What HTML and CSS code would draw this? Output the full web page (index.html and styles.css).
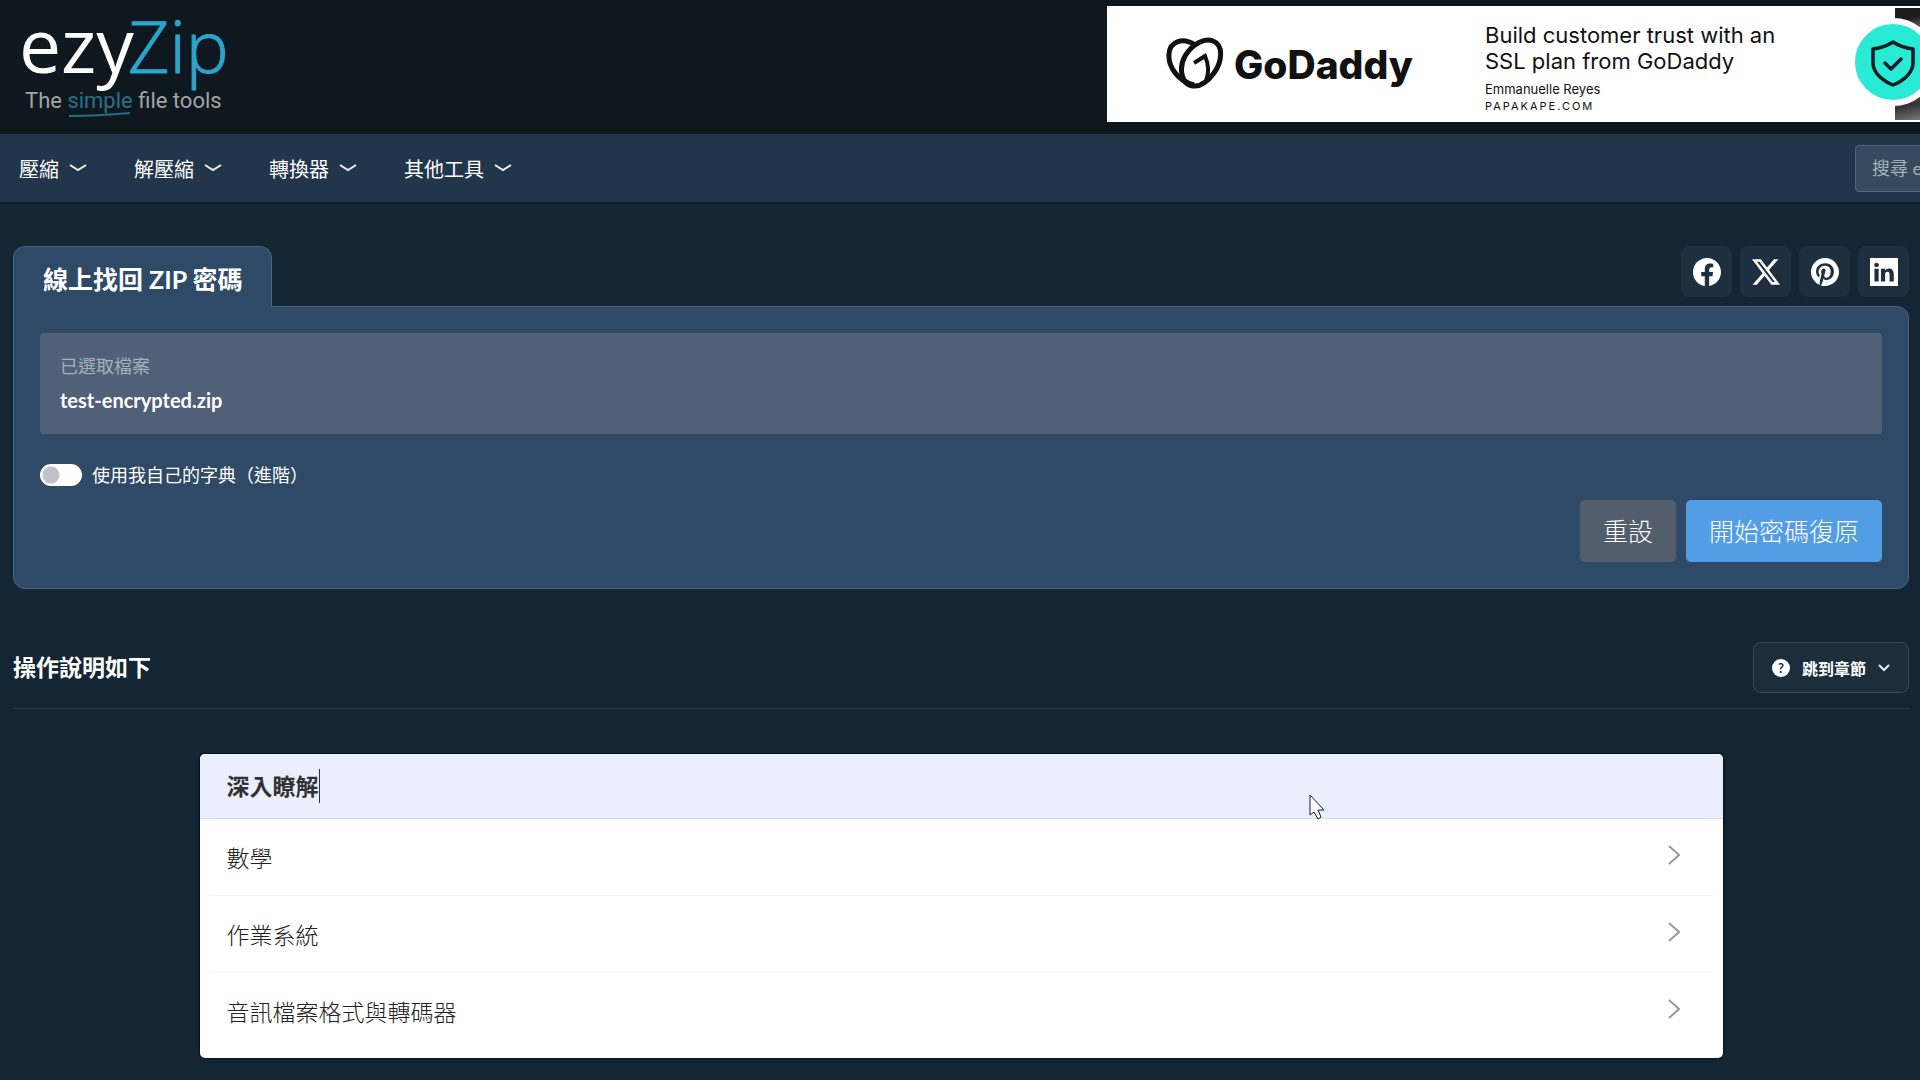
FILE: index.html
```html
<!DOCTYPE html>
<html lang="zh-Hant">
<head>
    <meta charset="UTF-8">
    <meta name="viewport" content="width=device-width, initial-scale=1.0">
    <title>線上找回 ZIP 密碼 - ezyZip</title>
    <link rel="stylesheet" href="styles.css">
</head>
<body>
    <header class="header">
        <a class="logo" href="#" aria-label="ezyZip">
            <svg width="240" height="124" viewBox="0 0 240 124">
                <text class="logo-ezy" x="19" y="73">ezy</text>
                <text class="logo-zip" x="128" y="73">Zip</text>
                <text class="logo-tagline" x="25" y="108">The <tspan class="logo-simple">simple</tspan> file tools</text>
                <path d="M69 116Q97 116 130 113" fill="none" stroke="#226f8a" stroke-width="2"/>
            </svg>
        </a>
        <a class="ad" href="#">
            <svg class="ad-logo" width="60" height="54" viewBox="0 0 60 54" fill="none" stroke="#111" stroke-width="5">
                <path d="M28 48C12 44 2 30 3 17C4 4 17 0 29 8"/>
                <path d="M29 49C14 49 13 30 19 19C27 6 39 1 47 4C58 8 56 25 48 36C42 44 36 49 29 49Z"/>
                <path d="M28 26L39 19C43 28 43 36 40 44" stroke-width="4"/>
            </svg>
            <span class="ad-brand">GoDaddy</span>
            <span class="ad-text">
                <span class="ad-title">Build customer trust with an<br>SSL plan from GoDaddy</span>
                <span class="ad-name">Emmanuelle Reyes</span>
                <span class="ad-site">PAPAKAPE.COM</span>
            </span>
            <span class="ad-photo"></span>
            <span class="ad-badge">
                <svg width="46" height="48" viewBox="0 0 46 48" fill="none" stroke="#101c26" stroke-width="3.5" stroke-linecap="round" stroke-linejoin="round">
                    <path d="M23 3C29 7 36 9 43 10V24C43 34 33 42 23 46C13 42 3 34 3 24V10C10 9 17 7 23 3Z"/>
                    <path d="M15 24L21 30L31 20"/>
                </svg>
            </span>
        </a>
    </header>

    <nav class="nav">
        <div class="menu">
            <a href="#">壓縮 <svg width="18" height="8" viewBox="0 0 18 8"><path d="M1 1L9 6L17 1"/></svg></a>
            <a href="#">解壓縮 <svg width="18" height="8" viewBox="0 0 18 8"><path d="M1 1L9 6L17 1"/></svg></a>
            <a href="#">轉換器 <svg width="18" height="8" viewBox="0 0 18 8"><path d="M1 1L9 6L17 1"/></svg></a>
            <a href="#">其他工具 <svg width="18" height="8" viewBox="0 0 18 8"><path d="M1 1L9 6L17 1"/></svg></a>
        </div>
        <input class="search" type="search" placeholder="搜尋 ezyZip" aria-label="搜尋 ezyZip">
    </nav>

    <main class="main">
        <div class="top">
            <h1 class="tab">線上找回 ZIP 密碼</h1>
            <div class="social">
                <a href="#" aria-label="Facebook">
                    <svg width="28" height="28" viewBox="0 0 16 16"><path d="M16 8.049c0-4.446-3.582-8.05-8-8.05C3.58 0-.002 3.603-.002 8.05c0 4.017 2.926 7.347 6.75 7.951v-5.625h-2.03V8.05H6.75V6.275c0-2.017 1.195-3.131 3.022-3.131.876 0 1.791.157 1.791.157v1.98h-1.009c-.993 0-1.303.621-1.303 1.258v1.51h2.218l-.354 2.326H9.25V16c3.824-.604 6.75-3.934 6.75-7.951"/></svg>
                </a>
                <a href="#" aria-label="X">
                    <svg width="28" height="28" viewBox="0 0 16 16"><path d="M12.6.75h2.454l-5.36 6.142L16 15.25h-4.937l-3.867-5.07-4.425 5.07H.316l5.733-6.57L0 .75h5.063l3.495 4.633L12.601.75Zm-.86 13.028h1.36L4.323 2.145H2.865z"/></svg>
                </a>
                <a href="#" aria-label="Pinterest">
                    <svg width="28" height="28" viewBox="0 0 16 16"><path d="M8 0a8 8 0 0 0-2.915 15.452c-.07-.633-.134-1.606.027-2.297.146-.625.938-3.977.938-3.977s-.239-.479-.239-1.187c0-1.113.645-1.943 1.448-1.943.682 0 1.012.512 1.012 1.127 0 .686-.437 1.712-.663 2.663-.188.796.4 1.446 1.185 1.446 1.422 0 2.515-1.5 2.515-3.664 0-1.915-1.377-3.254-3.342-3.254-2.276 0-3.612 1.707-3.612 3.471 0 .688.265 1.425.595 1.826a.24.24 0 0 1 .056.23c-.061.252-.196.796-.222.907-.035.146-.116.177-.268.107-1-.465-1.624-1.926-1.624-3.1 0-2.523 1.834-4.84 5.286-4.84 2.775 0 4.932 1.977 4.932 4.62 0 2.757-1.739 4.976-4.151 4.976-.811 0-1.573-.421-1.834-.919l-.498 1.902c-.181.695-.669 1.566-.995 2.097A8 8 0 1 0 8 0"/></svg>
                </a>
                <a href="#" aria-label="LinkedIn">
                    <svg width="28" height="28" viewBox="0 0 16 16"><path fill-rule="evenodd" d="M0 0H16V16H0ZM4.943 13.394V6.169H2.542V13.394ZM3.743 5.182C4.58 5.182 5.1 4.628 5.1 3.934C5.085 3.226 4.58 2.686 3.758 2.686S2.4 3.226 2.4 3.934C2.4 4.628 2.921 5.182 3.727 5.182ZM8.651 13.394V9.359C8.651 9.143 8.667 8.928 8.73 8.773C8.904 8.341 9.299 7.894 9.962 7.894C10.831 7.894 11.178 8.556 11.178 9.527V13.394H13.579V9.25C13.579 7.03 12.395 5.998 10.815 5.998C9.541 5.998 8.97 6.698 8.651 7.189V6.169H6.25V13.394Z"/></svg>
                </a>
            </div>
        </div>

        <section class="panel">
            <div class="file">
                <div class="file-label">已選取檔案</div>
                <div class="file-name">test-encrypted.zip</div>
            </div>
            <label class="switch">
                <input type="checkbox">
                使用我自己的字典（進階）
            </label>
            <div class="buttons">
                <button class="btn" type="button">重設</button>
                <button class="btn btn-primary" type="button">開始密碼復原</button>
            </div>
        </section>

        <div class="instructions">
            <h2>操作說明如下</h2>
            <button class="jump" type="button">
                <span class="help">?</span>
                跳到章節
                <svg width="12" height="8" viewBox="0 0 12 8"><path d="M1 1L6 6L11 1"/></svg>
            </button>
        </div>

        <section class="learn">
            <h3><span class="caret">深入瞭解</span></h3>
            <ul>
                <li><a href="#">數學 <svg width="12" height="24" viewBox="0 0 12 24"><path d="M1 1L11 10L1 19"/></svg></a></li>
                <li><a href="#">作業系統 <svg width="12" height="24" viewBox="0 0 12 24"><path d="M1 1L11 10L1 19"/></svg></a></li>
                <li><a href="#">音訊檔案格式與轉碼器 <svg width="12" height="24" viewBox="0 0 12 24"><path d="M1 1L11 10L1 19"/></svg></a></li>
            </ul>
            <svg class="pointer" width="17" height="26" viewBox="0 0 17 26"><path d="M1 1V21L5 18L9 25L12 23L9 16H15Z" fill="#fff" stroke="#1b1b2b"/></svg>
        </section>
    </main>
</body>
</html>
```
FILE: styles.css
```css
* {
    box-sizing: border-box;
}
body {
    margin: 0;
    font-family: Lato, "Noto Sans CJK TC", sans-serif;
    font-size: 18px;
    color: #fff;
    background-color: #142634;
}
a {
    color: inherit;
    text-decoration: none;
}
h1, h2, h3, ul {
    margin: 0;
    padding: 0;
}

/* header */
.header {
    display: flex;
    justify-content: space-between;
    align-items: flex-start;
    height: 134px;
    padding-top: 6px;
    background-color: #0e181e;
}
.logo svg {
    display: block;
    margin-top: -6px;
    overflow: visible;
}
.logo-ezy {
    font: 500 75px "Open Sans", sans-serif;
    fill: #fff;
}
.logo-zip {
    font: 300 72px "Open Sans", sans-serif;
    fill: #2ba5cd;
    stroke: #2ba5cd;
    stroke-width: 1;
}
.logo-tagline {
    font: 400 22px Roboto, sans-serif;
    fill: #a0a4a3;
}
.logo-simple {
    fill: #2b7086;
}
.ad {
    position: relative;
    display: flex;
    align-items: center;
    width: 813px;
    height: 116px;
    padding-left: 59px;
    color: #111;
    background-color: #fff;
    font-family: Inter, sans-serif;
    overflow: hidden;
}
.ad-logo {
    margin-right: 8px;
}
.ad-brand {
    width: 251px;
    font-size: 39px;
    font-weight: 800;
}
.ad-text {
    display: flex;
    flex-direction: column;
    padding-top: 8px;
    white-space: nowrap;
}
.ad-title {
    font-size: 22px;
    line-height: 26px;
}
.ad-name {
    margin-top: 6px;
    font-size: 13px;
    line-height: 18px;
}
.ad-site {
    font-size: 11px;
    line-height: 16px;
    letter-spacing: 2px;
}
.ad-photo {
    position: absolute;
    top: 2px;
    right: 0;
    width: 25px;
    height: 112px;
    background: linear-gradient(165deg, #1d1c20 12%, #76605a 22%, #665552 75%, #333336 85%, #77787a);
}
.ad-badge {
    position: absolute;
    top: 12px;
    right: -17px;
    width: 88px;
    height: 88px;
    padding: 15px;
    border: 6px solid #fff;
    border-radius: 50%;
    background-color: #29ead5;
}

/* nav */
.nav {
    display: flex;
    justify-content: space-between;
    align-items: center;
    height: 70px;
    padding-left: 19px;
    background-color: #22364b;
    border-bottom: 2px solid #0c1c28;
    overflow: hidden;
}
.menu {
    display: flex;
    gap: 47px;
    font-size: 20px;
}
.menu a {
    display: flex;
    align-items: center;
    gap: 10px;
}
.menu svg, .jump svg {
    fill: none;
    stroke: #e8f0f8;
    stroke-width: 2;
}
.search {
    width: 240px;
    height: 47px;
    margin-right: -175px;
    padding: 0 16px;
    font: inherit;
    color: #fff;
    background-color: #36495d;
    border: 1px solid #52657a;
    border-radius: 4px;
}
.search::placeholder {
    color: #a4b2c0;
}

/* tool */
.main {
    padding: 42px 11px 0 13px;
}
.top {
    display: flex;
    justify-content: space-between;
    align-items: flex-start;
}
.tab {
    position: relative;
    height: 61px;
    margin-bottom: -1px;
    padding: 0 29px;
    font-size: 25px;
    line-height: 64px;
    background-color: #2f4a66;
    border: 1px solid #4a647f;
    border-bottom: 0;
    border-radius: 12px 12px 0 0;
}
.social {
    display: flex;
    gap: 8px;
}
.social a {
    display: flex;
    align-items: center;
    justify-content: center;
    width: 51px;
    height: 51px;
    background-color: #1e2f3f;
    border-radius: 8px;
}
.social svg {
    fill: #fff;
}
.panel {
    padding: 26px;
    background-color: #2f4a66;
    border: 1px solid #4a647f;
    border-radius: 0 12px 12px 12px;
}
.file {
    padding: 16px 20px 17px;
    line-height: 34px;
    background-color: #4f6078;
    border-radius: 4px;
}
.file-label {
    color: #a5b1be;
}
.file-name {
    font-size: 20px;
    font-weight: 700;
}
.switch {
    display: flex;
    align-items: center;
    gap: 10px;
    margin-top: 27px;
    line-height: 28px;
}
.switch input {
    appearance: none;
    width: 42px;
    height: 22px;
    margin: 0;
    border-radius: 11px;
    background: radial-gradient(circle at 11px 11px, #c3c1c8 8px, #fff 9px);
}
.buttons {
    display: flex;
    justify-content: flex-end;
    gap: 10px;
    margin-top: 11px;
}
.btn {
    height: 62px;
    padding: 0 23px 2px;
    font-family: inherit;
    font-size: 25px;
    font-weight: 300;
    color: #fff;
    background-color: #525e6b;
    border: 0;
    border-radius: 5px;
}
.btn-primary {
    background-color: #529de3;
}

/* instructions */
.instructions {
    display: flex;
    justify-content: space-between;
    align-items: center;
    margin-top: 53px;
    padding-bottom: 15px;
    border-bottom: 1px solid #263746;
}
.instructions h2 {
    padding-bottom: 4px;
    font-size: 23px;
}
.jump {
    display: flex;
    align-items: center;
    gap: 12px;
    height: 51px;
    padding: 0 18px;
    font-family: inherit;
    font-size: 16px;
    font-weight: 700;
    color: #fff;
    background-color: #1c2d3c;
    border: 1px solid #384b5a;
    border-radius: 8px;
}
.help {
    width: 18px;
    height: 18px;
    font-size: 13px;
    line-height: 18px;
    color: #1c2d3c;
    background-color: #fff;
    border-radius: 50%;
}

/* related topics */
.learn {
    position: relative;
    max-width: 1523px;
    margin: 45px auto 20px;
    padding-bottom: 9px;
    font-size: 23px;
    color: #222;
    background-color: #fff;
    border-radius: 5px;
    box-shadow: 0 0 2px 1px #07121c;
}
.learn h3 {
    padding: 0 27px;
    font-size: 23px;
    line-height: 64px;
    color: #333;
    background-color: #e9effd;
    border-bottom: 1px solid #d9dce3;
    border-radius: 5px 5px 0 0;
}
.caret {
    padding: 3px 0;
    border-right: 1px solid #333;
}
.learn ul {
    padding: 0 10px;
    list-style: none;
}
.learn li + li {
    border-top: 1px solid #f6f6f7;
}
.learn a {
    display: flex;
    justify-content: space-between;
    align-items: center;
    height: 76px;
    padding: 0 33px 0 17px;
    font-weight: 300;
}
.learn a svg {
    fill: none;
    stroke: #999;
    stroke-width: 2;
}
.learn .pointer {
    position: absolute;
    top: 40px;
    left: 1109px;
}
```
